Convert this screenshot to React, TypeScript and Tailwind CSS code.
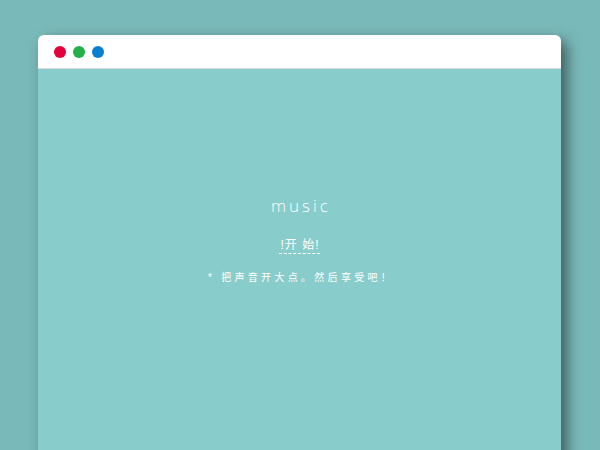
export default function App() {
  return (
    <div className="h-[450px] w-[600px] overflow-hidden bg-[#7ab9b9] pl-[38px] pt-[35px] font-['Liberation_Sans','Noto_Sans_CJK_SC',sans-serif]">
      <div className="h-[460px] w-[523px] overflow-hidden rounded-[6px] bg-[#88cccb] shadow-[6px_6px_14px_rgba(0,0,0,0.5)]">
        {/* title bar */}
        <div className="flex h-[34px] items-center gap-[7px] border-b border-[#d9d9d9] bg-white pl-[16px]">
          <span className="h-[12px] w-[12px] rounded-full bg-[#e4003a]" />
          <span className="h-[12px] w-[12px] rounded-full bg-[#22b04b]" />
          <span className="h-[12px] w-[12px] rounded-full bg-[#0a7fd0]" />
        </div>
        {/* content */}
        <div className="flex flex-col items-center pt-[127px] text-white">
          <p className="pl-[3px] font-['Open_Sans',sans-serif] text-[17px] font-light leading-[20px] tracking-[3px]">
            music
          </p>
          <p className="mt-[22px] border-b border-dashed border-white pb-[1px] pl-[1px] text-[12px] leading-[14px] tracking-[1px]">
            !开 始!
          </p>
          <p className="mt-[18px] pl-[3px] text-[10px] leading-[12px] tracking-[3.3px]">
            * 把声音开大点。然后享受吧！
          </p>
        </div>
      </div>
    </div>
  );
}
